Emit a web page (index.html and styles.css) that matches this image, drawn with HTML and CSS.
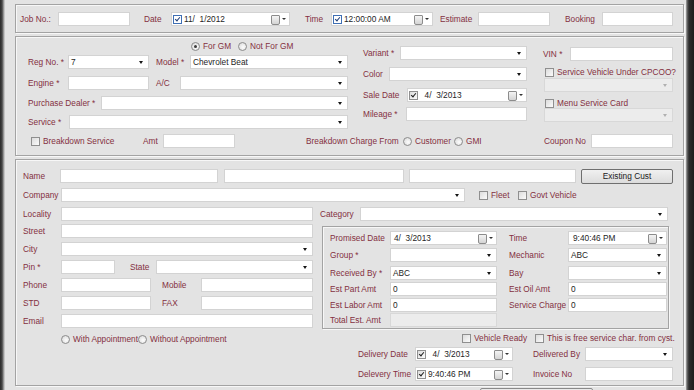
FILE: index.html
```html
<!DOCTYPE html>
<html lang="en">
<head>
    <meta charset="UTF-8">
    <title>Job Card</title>
    <link rel="stylesheet" href="styles.css">
</head>
<body>
    <div class="edge-l"></div>
    <div class="form">
        <!-- job header -->
        <div class="group g-head">
            <div class="row">
                <span class="lbl w38">Job No.:</span>
                <span class="txt w72"></span>
                <span class="lbl ml14 w27">Date</span>
                <span class="dtp w119"><span class="cb on blue"></span><span class="val">11/  1/2012</span></span>
                <span class="lbl ml15 w26">Time</span>
                <span class="dtp w102"><span class="cb on blue"></span><span class="val">12:00:00 AM</span></span>
                <span class="lbl ml7 w38">Estimate</span>
                <span class="txt w72"></span>
                <span class="lbl ml15 w37">Booking</span>
                <span class="txt w71"></span>
            </div>
        </div>

        <!-- vehicle -->
        <div class="group g-car">
            <div class="car-top">
                <div class="col-a">
                    <div class="row small">
                        <span class="rad on ml163 w47"><span class="dot"></span>For GM</span>
                        <span class="rad"><span class="dot"></span>Not For GM</span>
                    </div>
                    <div class="row mt4">
                        <span class="lbl w40">Reg No. *</span>
                        <span class="cmb w81">7</span>
                        <span class="lbl ml7 w34">Model *</span>
                        <span class="cmb w158">Chevrolet Beat</span>
                    </div>
                    <div class="row mt7">
                        <span class="lbl w40">Engine *</span>
                        <span class="txt w81"></span>
                        <span class="lbl ml7 w24">A/C</span>
                        <span class="cmb w168"></span>
                    </div>
                    <div class="row mt6">
                        <span class="lbl w73">Purchase Dealer *</span>
                        <span class="cmb w247"></span>
                    </div>
                    <div class="row mt5">
                        <span class="lbl w41">Service *</span>
                        <span class="cmb w279"></span>
                    </div>
                </div>
                <div class="col-b">
                    <div class="row mt9">
                        <span class="lbl w37">Variant *</span>
                        <span class="cmb w127"></span>
                    </div>
                    <div class="row mt7">
                        <span class="lbl w26">Color</span>
                        <span class="cmb w138"></span>
                    </div>
                    <div class="row mt7">
                        <span class="lbl w44">Sale Date</span>
                        <span class="dtp w120"><span class="cb on"></span><span class="val">  4/  3/2013</span></span>
                    </div>
                    <div class="row mt5">
                        <span class="lbl w43">Mileage *</span>
                        <span class="txt w121"></span>
                    </div>
                </div>
                <div class="col-c">
                    <div class="row mt10">
                        <span class="lbl w27">VIN *</span>
                        <span class="txt w103"></span>
                    </div>
                    <div class="row small mt6">
                        <span class="chk ml2"><span class="box"></span>Service Vehicle Under CPCOO?</span>
                    </div>
                    <div class="row mt1">
                        <span class="cmb off ml1 w129"></span>
                    </div>
                    <div class="row small mt6">
                        <span class="chk ml2"><span class="box"></span>Menu Service Card</span>
                    </div>
                    <div class="row">
                        <span class="cmb off ml1 w129"></span>
                    </div>
                </div>
            </div>
            <div class="row mt5">
                <span class="chk ml15 w112"><span class="box"></span>Breakdown Service</span>
                <span class="lbl w20">Amt</span>
                <span class="txt w72"></span>
                <span class="lbl ml71 w97">Breakdown Charge From</span>
                <span class="rad w51"><span class="dot"></span>Customer</span>
                <span class="rad w90"><span class="dot"></span>GMI</span>
                <span class="lbl w47">Coupon No</span>
                <span class="txt w82"></span>
            </div>
        </div>

        <!-- customer -->
        <div class="group g-cust">
            <div class="row">
                <span class="lbl ml7 w37">Name</span>
                <span class="txt w158"></span>
                <span class="txt ml6 w180"></span>
                <span class="txt ml5 w167"></span>
                <span class="btn ml5 w92">Existing Cust</span>
            </div>
            <div class="row mt5">
                <span class="lbl ml7 w38">Company</span>
                <span class="cmb w404"></span>
                <span class="chk ml14 w39"><span class="box"></span>Fleet</span>
                <span class="chk"><span class="box"></span>Govt Vehicle</span>
            </div>
            <div class="row mt5">
                <span class="lbl ml7 w38">Locality</span>
                <span class="txt w252"></span>
                <span class="lbl ml7 w40">Category</span>
                <span class="cmb w308"></span>
            </div>
            <div class="cust-cols">
                <div class="col-l">
                    <div class="row">
                        <span class="lbl w38">Street</span>
                        <span class="txt w252"></span>
                    </div>
                    <div class="row mt4">
                        <span class="lbl w38">City</span>
                        <span class="cmb w252"></span>
                    </div>
                    <div class="row mt4">
                        <span class="lbl w38">Pin *</span>
                        <span class="txt w54"></span>
                        <span class="lbl ml15 w26">State</span>
                        <span class="cmb w157"></span>
                    </div>
                    <div class="row mt4">
                        <span class="lbl w38">Phone</span>
                        <span class="txt w90"></span>
                        <span class="lbl ml11 w39">Mobile</span>
                        <span class="txt w112"></span>
                    </div>
                    <div class="row mt4">
                        <span class="lbl w38">STD</span>
                        <span class="txt w90"></span>
                        <span class="lbl ml11 w39">FAX</span>
                        <span class="txt w112"></span>
                    </div>
                    <div class="row mt4">
                        <span class="lbl w38">Email</span>
                        <span class="txt w252"></span>
                    </div>
                    <div class="row small mt6">
                        <span class="rad ml38 w77"><span class="dot"></span>With Appointment</span>
                        <span class="rad"><span class="dot"></span>Without Appointment</span>
                    </div>
                </div>
                <div class="col-r">
                    <div class="inner">
                        <div class="row mt4">
                            <span class="lbl ml7 w60">Promised Date</span>
                            <span class="dtp w107"><span class="val">4/  3/2013</span></span>
                            <span class="lbl ml12 w59">Time</span>
                            <span class="dtp w99"><span class="val pad">9:40:46 PM</span></span>
                        </div>
                        <div class="row mt3">
                            <span class="lbl ml7 w60">Group *</span>
                            <span class="cmb w107"></span>
                            <span class="lbl ml12 w59">Mechanic</span>
                            <span class="cmb w99">ABC</span>
                        </div>
                        <div class="row mt4">
                            <span class="lbl ml7 w60">Received By *</span>
                            <span class="cmb w107">ABC</span>
                            <span class="lbl ml12 w59">Bay</span>
                            <span class="cmb w99"></span>
                        </div>
                        <div class="row mt2">
                            <span class="lbl ml7 w60">Est Part Amt</span>
                            <span class="txt w107">0</span>
                            <span class="lbl ml12 w59">Est Oil Amt</span>
                            <span class="txt w99">0</span>
                        </div>
                        <div class="row mt2">
                            <span class="lbl ml7 w60">Est Labor Amt</span>
                            <span class="txt w107">0</span>
                            <span class="lbl ml12 w59">Service Charge</span>
                            <span class="txt w99">0</span>
                        </div>
                        <div class="row mt1">
                            <span class="lbl ml7 w60">Total Est. Amt</span>
                            <span class="txt off w107"></span>
                        </div>
                    </div>
                    <div class="row small mt4">
                        <span class="chk ml140 w73"><span class="box"></span>Vehicle Ready</span>
                        <span class="chk"><span class="box"></span>This is free service char. from cyst.</span>
                    </div>
                    <div class="row mt4">
                        <span class="lbl ml36 w57">Delivery Date</span>
                        <span class="dtp w98"><span class="cb on"></span><span class="val">  4/  3/2013</span></span>
                        <span class="lbl ml20 w52">Delivered By</span>
                        <span class="cmb w88"></span>
                    </div>
                    <div class="row mt6">
                        <span class="lbl ml36 w57">Delevery Time</span>
                        <span class="dtp w98"><span class="cb on"></span><span class="val">9:40:46 PM</span></span>
                        <span class="lbl ml20 w52">Invoice No</span>
                        <span class="txt w88"></span>
                    </div>
                </div>
            </div>
        </div>
        <div class="stub"></div>
    </div>
    <div class="edge-r"></div>
</body>
</html>
```

FILE: styles.css
```css
* {
    box-sizing: border-box;
}
body {
    margin: 0;
    width: 694px;
    height: 390px;
    overflow: hidden;
    display: flex;
    background: #e3e3e3;
    font-family: "Liberation Sans", Arial, sans-serif;
    font-size: 8.3px;
    color: #84303f;
}
.edge-l {
    flex: none;
    width: 5px;
    background: linear-gradient(90deg, #2a2a2a, #454545 2px, #767676 3px, #b3b3b3 4px, #d6d6d6);
}
.edge-r {
    flex: none;
    width: 8px;
    background: linear-gradient(90deg, #b0b0b0, #6a6a6a 1px, #2c2c2c 3px, #1c1c1c);
}
.form {
    flex: none;
    width: 681px;
    padding: 4px 2px 0 10px;
}
.group {
    border: 1px solid #a3a3a3;
    box-shadow: inset 1px 1px 0 #f7f7f7, 1px 1px 0 #f7f7f7;
}
.g-head {
    padding: 7px 0 6px 4px;
}
.g-car {
    margin-top: 3px;
    padding-bottom: 7px;
}
.g-cust {
    margin-top: 3px;
    padding: 9px 0 4px 0;
}
.car-top {
    display: flex;
}
.col-a {
    margin-left: 12px;
    width: 320px;
    padding-top: 4px;
}
.col-b {
    margin-left: 15px;
    width: 164px;
}
.col-c {
    margin-left: 16px;
    width: 130px;
}
.cust-cols {
    display: flex;
    margin-top: 3px;
}
.col-l {
    margin-left: 7px;
    width: 290px;
}
.col-r {
    margin-left: 9px;
    width: 351px;
    padding-top: 2px;
}
.inner {
    width: 347px;
    padding-bottom: 1px;
    border: 1px solid #a3a3a3;
    box-shadow: inset 1px 1px 0 #f7f7f7, 1px 1px 0 #f7f7f7;
}
.stub {
    margin: 2px 0 0 465px;
    width: 113px;
    height: 8px;
    border: 1px solid #8a8a8a;
    border-radius: 2px;
    background: #e9e9e9;
}

/* rows and controls */
.row {
    display: flex;
    align-items: center;
    height: 14px;
}
.row.small {
    height: 10px;
}
.lbl {
    flex: none;
    white-space: nowrap;
}
.txt, .cmb, .dtp {
    flex: none;
    position: relative;
    display: flex;
    align-items: center;
    height: 14px;
    padding-left: 2px;
    background: #fff;
    border: 1px solid #d3d3d3;
    color: #1e1e1e;
    white-space: pre;
}
.cmb::after {
    content: "";
    position: absolute;
    right: 5px;
    top: 5px;
    border-left: 2.5px solid transparent;
    border-right: 2.5px solid transparent;
    border-top: 3px solid #151515;
}
.cmb.off, .txt.off {
    background: #ececec;
    border-color: #d8d8d8;
}
.cmb.off::after {
    border-top-color: #b0b0b0;
}
.dtp {
    padding-left: 1px;
}
.dtp::before {
    content: "";
    position: absolute;
    right: 9px;
    top: 2px;
    width: 7px;
    height: 8px;
    border: 1px solid #8c8c8c;
    border-radius: 1px 1px 2px 2px;
    background: linear-gradient(#f4f4f4, #d4d4d4);
}
.dtp::after {
    content: "";
    position: absolute;
    right: 3px;
    top: 5px;
    border-left: 2px solid transparent;
    border-right: 2px solid transparent;
    border-top: 2.5px solid #333;
}
.dtp .val {
    padding-left: 2px;
}
.dtp .val.pad {
    padding-left: 3px;
}
.cb, .box {
    flex: none;
    position: relative;
    width: 9px;
    height: 9px;
    border: 1px solid #8f8f8f;
    background: linear-gradient(135deg, #dcdcdc, #fbfbfb);
}
.cb.blue {
    border-color: #3f6fb4;
    background: #fff;
}
.cb.on::after {
    content: "";
    position: absolute;
    left: 2px;
    top: 0px;
    width: 2px;
    height: 4px;
    border-right: 1.4px solid #1f1f1f;
    border-bottom: 1.4px solid #1f1f1f;
    transform: rotate(40deg);
}
.cb.blue.on::after {
    border-color: #1f3f7a;
}
.chk, .rad {
    flex: none;
    display: flex;
    align-items: center;
    gap: 3px;
    white-space: nowrap;
}
.chk {
    gap: 3px;
}
.dot {
    flex: none;
    position: relative;
    width: 9px;
    height: 9px;
    border: 1px solid #8c8c8c;
    border-radius: 50%;
    background: radial-gradient(circle at 60% 60%, #fdfdfd, #d6d6d6);
}
.rad.on .dot::after {
    content: "";
    position: absolute;
    left: 2px;
    top: 2px;
    width: 3px;
    height: 3px;
    border-radius: 50%;
    background: #3a3a3a;
}
.btn {
    flex: none;
    display: flex;
    align-items: center;
    justify-content: center;
    height: 15px;
    border: 1px solid #6f6f6f;
    border-radius: 2px;
    background: linear-gradient(#f0f0f0, #dcdcdc);
    color: #1a1a1a;
}

/* spacing */
.mt1 { margin-top: 1px; }
.mt2 { margin-top: 2px; }
.mt3 { margin-top: 3px; }
.mt4 { margin-top: 4px; }
.mt5 { margin-top: 5px; }
.mt6 { margin-top: 6px; }
.mt7 { margin-top: 7px; }
.mt9 { margin-top: 9px; }
.mt10 { margin-top: 10px; }
.ml1 { margin-left: 1px; }
.ml2 { margin-left: 2px; }
.ml5 { margin-left: 5px; }
.ml6 { margin-left: 6px; }
.ml7 { margin-left: 7px; }
.ml11 { margin-left: 11px; }
.ml12 { margin-left: 12px; }
.ml14 { margin-left: 14px; }
.ml15 { margin-left: 15px; }
.ml20 { margin-left: 20px; }
.ml36 { margin-left: 36px; }
.ml38 { margin-left: 38px; }
.ml71 { margin-left: 71px; }
.ml140 { margin-left: 140px; }
.ml163 { margin-left: 163px; }

/* widths */
.w20 { width: 20px; }
.w24 { width: 24px; }
.w26 { width: 26px; }
.w27 { width: 27px; }
.w34 { width: 34px; }
.w37 { width: 37px; }
.w38 { width: 38px; }
.w39 { width: 39px; }
.w40 { width: 40px; }
.w41 { width: 41px; }
.w43 { width: 43px; }
.w44 { width: 44px; }
.w47 { width: 47px; }
.w51 { width: 51px; }
.w52 { width: 52px; }
.w54 { width: 54px; }
.w57 { width: 57px; }
.w59 { width: 59px; }
.w60 { width: 60px; }
.w71 { width: 71px; }
.w72 { width: 72px; }
.w73 { width: 73px; }
.w77 { width: 77px; }
.w81 { width: 81px; }
.w82 { width: 82px; }
.w88 { width: 88px; }
.w90 { width: 90px; }
.w92 { width: 92px; }
.w97 { width: 97px; }
.w98 { width: 98px; }
.w99 { width: 99px; }
.w102 { width: 102px; }
.w103 { width: 103px; }
.w107 { width: 107px; }
.w112 { width: 112px; }
.w119 { width: 119px; }
.w120 { width: 120px; }
.w121 { width: 121px; }
.w127 { width: 127px; }
.w129 { width: 129px; }
.w138 { width: 138px; }
.w157 { width: 157px; }
.w158 { width: 158px; }
.w167 { width: 167px; }
.w168 { width: 168px; }
.w180 { width: 180px; }
.w247 { width: 247px; }
.w252 { width: 252px; }
.w279 { width: 279px; }
.w308 { width: 308px; }
.w404 { width: 404px; }
```
